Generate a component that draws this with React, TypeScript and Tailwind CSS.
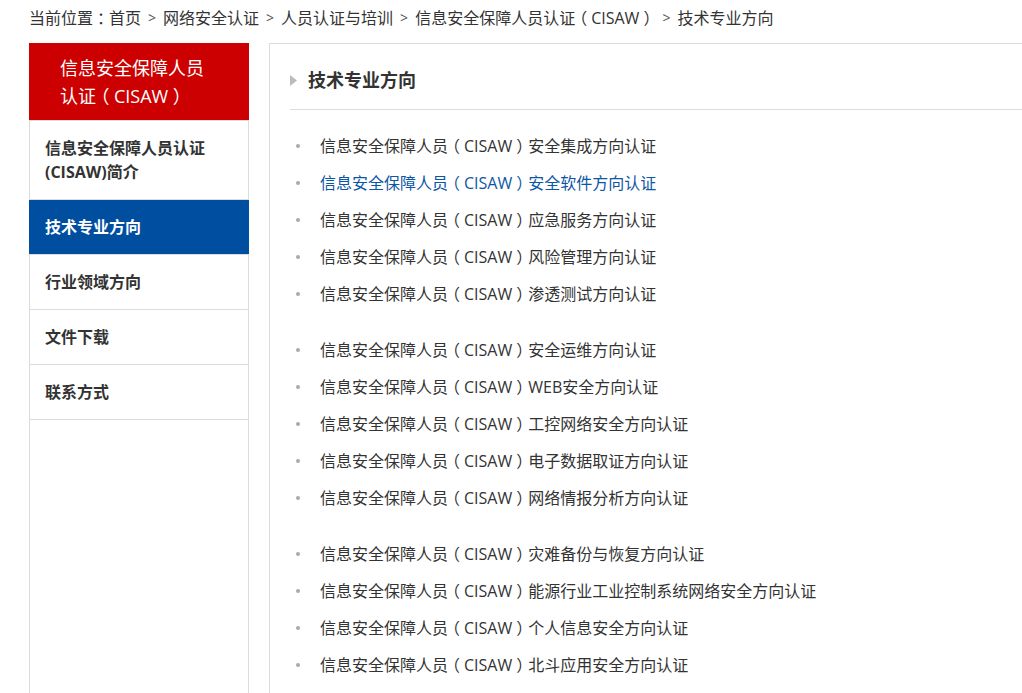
import React from "react";

const font = {
  fontFamily: '"Open Sans", "Noto Sans CJK SC", sans-serif',
};

// YaHei centres full-width punctuation; Noto SC hugs it to one side.
// Use the half-width form and pad it back out to a full em.
function T({ children }: { children: string }) {
  const parts = children.split(/([（）：])/);
  return (
    <>
      {parts.map((p, i) =>
        p === "（" || p === "）" || p === "：" ? (
          <span key={i} className="inline-block px-[0.25em] [font-feature-settings:'halt']">
            {p}
          </span>
        ) : (
          <React.Fragment key={i}>{p}</React.Fragment>
        )
      )}
    </>
  );
}

const sideItems = [
  { label: ["信息安全保障人员认证", "(CISAW)简介"], active: false },
  { label: ["技术专业方向"], active: true },
  { label: ["行业领域方向"], active: false },
  { label: ["文件下载"], active: false },
  { label: ["联系方式"], active: false },
];

const groups = [
  ["安全集成方向认证", "安全软件方向认证", "应急服务方向认证", "风险管理方向认证", "渗透测试方向认证"],
  ["安全运维方向认证", "WEB安全方向认证", "工控网络安全方向认证", "电子数据取证方向认证", "网络情报分析方向认证"],
  ["灾难备份与恢复方向认证", "能源行业工业控制系统网络安全方向认证", "个人信息安全方向认证", "北斗应用安全方向认证"],
];

const crumbs = ["首页", "网络安全认证", "人员认证与培训", "信息安全保障人员认证（CISAW）", "技术专业方向"];

export default function App() {
  return (
    <div className="h-[693px] w-full overflow-hidden bg-white pl-[29px] text-[#333]" style={font}>
      {/* Breadcrumb */}
      <div className="flex h-[43px] items-start whitespace-nowrap text-[16px] leading-[36px]">
        <span>
          <T>当前位置：</T>
        </span>
        {crumbs.map((c, i) => (
          <span key={c} className="flex">
            {i > 0 && <span className="px-[7px] text-[14px] text-[#555]">&gt;</span>}
            <span>
              <T>{c}</T>
            </span>
          </span>
        ))}
      </div>

      <div className="flex h-[650px] gap-[20px]">
        {/* Sidebar */}
        <aside className="flex w-[220px] shrink-0 flex-col border-x border-[#dcdcdc]">
          <div className="-mx-px border-b border-[#dcdcdc] bg-[#cc0000] pl-[31px] pt-[11px] pb-[10px] text-[18px] leading-[28px] text-white">
            信息安全保障人员
            <br />
            <T>认证（CISAW）</T>
          </div>
          {sideItems.map((it, i) => (
            <div
              key={i}
              className={
                "flex flex-col justify-center border-b border-[#dcdcdc] px-[15px] text-[16px] font-bold leading-[24px] " +
                (i === 0 ? "h-[79px] " : "h-[55px] ") +
                (it.active ? "-mx-px bg-[#004e9f] pl-[16px] text-white" : "text-[#333]")
              }
            >
              {it.label.map((l) => (
                <span key={l}>{l}</span>
              ))}
            </div>
          ))}
        </aside>

        {/* Main */}
        <main className="flex-1 border-l border-t border-[#dcdcdc] pl-[20px]">
          <div className="flex items-center border-b border-[#dcdcdc] pt-[24px] pb-[17px]">
            <svg width="8" height="11" viewBox="0 0 8 11" className="mr-[10px]">
              <path d="M0 0 L7 5.5 L0 11 Z" fill="#bbbbbb" />
            </svg>
            <h2 className="text-[18px] font-bold leading-[24px] text-[#333]">技术专业方向</h2>
          </div>

          <div className="pt-[17px]">
            {groups.map((g, gi) => (
              <ul key={gi} className={gi > 0 ? "mt-[19px]" : ""}>
                {g.map((t, ti) => (
                  <li
                    key={t}
                    className={
                      "flex h-[37px] items-center whitespace-nowrap text-[16px] " +
                      (gi === 0 && ti === 1 ? "text-[#0d56a6]" : "text-[#333]")
                    }
                  >
                    <span className="ml-[6px] mr-[20px] h-[4px] w-[4px] shrink-0 rounded-full bg-[#aaaaaa]" />
                    <span>
                      <T>{"信息安全保障人员（CISAW）" + t}</T>
                    </span>
                  </li>
                ))}
              </ul>
            ))}
          </div>
        </main>
      </div>
    </div>
  );
}
